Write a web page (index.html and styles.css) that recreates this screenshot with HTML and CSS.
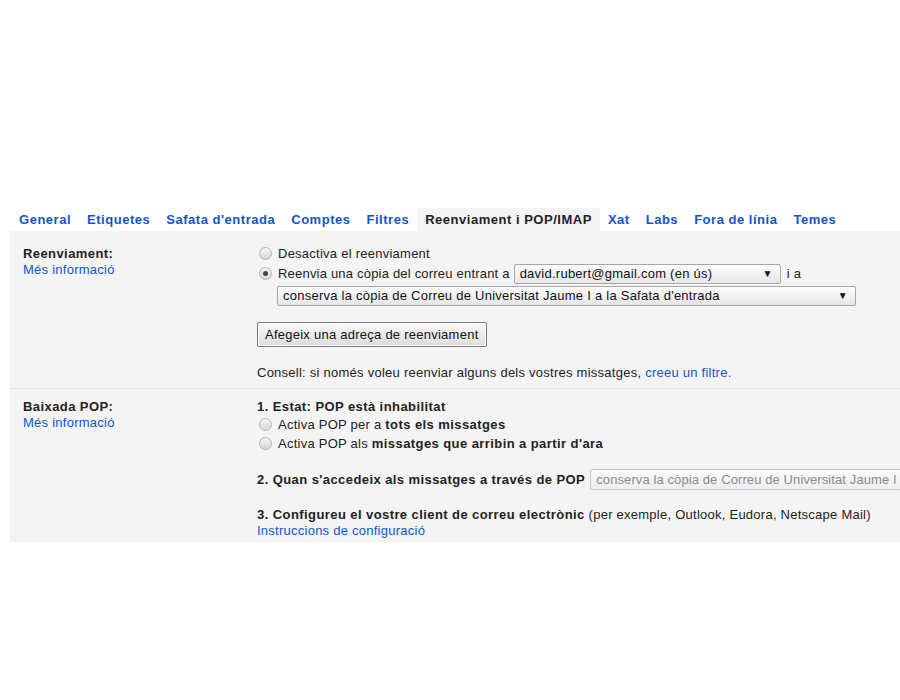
FILE: index.html
```html
<!DOCTYPE html>
<html lang="ca">
<head>
<meta charset="utf-8">
<title>Configuració</title>
<link rel="stylesheet" href="styles.css">
</head>
<body>
<div class="page">
  <nav class="tabs">
    <a class="tab">General</a>
    <a class="tab">Etiquetes</a>
    <a class="tab">Safata d'entrada</a>
    <a class="tab">Comptes</a>
    <a class="tab">Filtres</a>
    <span class="tab active">Reenviament i POP/IMAP</span>
    <a class="tab">Xat</a>
    <a class="tab">Labs</a>
    <a class="tab">Fora de línia</a>
    <a class="tab">Temes</a>
  </nav>
  <div class="panel">
    <div class="row row-fwd">
      <div class="label">
        <div class="label-title">Reenviament:</div>
        <a class="link">Més informació</a>
      </div>
      <div class="content">
        <div class="radio-line"><span class="radio"></span>Desactiva el reenviament</div>
        <div class="radio-line line-sel"><span class="radio checked"></span><span class="fwd-text">Reenvia una còpia del correu entrant a</span><span class="select sel-email">david.rubert@gmail.com (en ús)<span class="arrow">▼</span></span>i a</div>
        <div class="select sel-keep">conserva la còpia de Correu de Universitat Jaume I a la Safata d'entrada<span class="arrow">▼</span></div>
        <div class="btn">Afegeix una adreça de reenviament</div>
        <div class="tip">Consell: si només voleu reenviar alguns dels vostres missatges, <a class="link">creeu un filtre.</a></div>
      </div>
    </div>
    <div class="row row-pop">
      <div class="label">
        <div class="label-title">Baixada POP:</div>
        <a class="link">Més informació</a>
      </div>
      <div class="content">
        <div class="step"><b>1. Estat: POP està inhabilitat</b></div>
        <div class="radio-line"><span class="radio"></span>Activa POP per a&nbsp;<b>tots els missatges</b></div>
        <div class="radio-line"><span class="radio"></span>Activa POP als&nbsp;<b>missatges que arribin a partir d'ara</b></div>
        <div class="step step2"><b>2. Quan s'accedeix als missatges a través de POP</b><span class="select disabled">conserva la còpia de Correu de Universitat Jaume I</span></div>
        <div class="step step3"><b>3. Configureu el vostre client de correu electrònic</b> (per exemple, Outlook, Eudora, Netscape Mail)</div>
        <div class="step"><a class="link">Instruccions de configuració</a></div>
      </div>
    </div>
  </div>
</div>
</body>
</html>
```
FILE: styles.css
```css
html, body {
  margin: 0;
  padding: 0;
  background: #fff;
}
body {
  font-family: "Liberation Sans", Arial, sans-serif;
  font-size: 13px;
  letter-spacing: 0.25px;
  color: #222;
  overflow: hidden;
  width: 900px;
  height: 700px;
}
b, .label-title {
  font-weight: bold;
  letter-spacing: 0.42px;
}
.page {
  padding-top: 208px;
}
.tabs {
  display: flex;
  padding-left: 11px;
  height: 23px;
}
.tab {
  font-weight: bold;
  letter-spacing: 0.52px;
  color: #1155cc;
  line-height: 23px;
  padding: 0 8px;
  white-space: nowrap;
}
.tab.active {
  color: #222;
  background: #f4f4f4;
}
.panel {
  margin-left: 10px;
  width: 890px;
  background: #f4f4f4;
  overflow: hidden;
}
.row {
  display: flex;
  padding-left: 13px;
}
.row-fwd {
  padding-top: 13px;
  padding-bottom: 6px;
  border-bottom: 1px solid #e3e3e3;
}
.row-pop {
  padding-top: 10px;
  padding-bottom: 3px;
}
.label {
  width: 234px;
  flex: none;
  line-height: 16px;
}
.row-fwd .label {
  padding-top: 2px;
}
.label-title {
  color: #222;
}
.link {
  color: #1155cc;
  display: inline-block;
}
.content {
  flex: 1;
  white-space: nowrap;
  min-width: 0;
}
.radio-line {
  display: flex;
  align-items: center;
  height: 19px;
  line-height: 19px;
}
.line-sel {
  height: 21px;
}
.fwd-text {
  letter-spacing: 0.2px;
}
.radio {
  width: 11px;
  height: 11px;
  border-radius: 50%;
  border: 1px solid #b4b4b4;
  background: linear-gradient(#f6f6f6, #d6d6d6);
  margin: 0 6px 0 2px;
  position: relative;
  flex: none;
}
.radio.checked::after {
  content: "";
  position: absolute;
  left: 3px;
  top: 3px;
  width: 5px;
  height: 5px;
  border-radius: 50%;
  background: #444;
}
.select {
  display: inline-flex;
  align-items: center;
  box-sizing: border-box;
  height: 20px;
  border: 1px solid #a6a6a6;
  border-radius: 2px;
  background: linear-gradient(#fdfdfd, #e6e6e6);
  color: #111;
  padding: 0 7px 0 5px;
  line-height: 18px;
  white-space: nowrap;
  overflow: hidden;
}
.arrow {
  font-size: 10px;
  margin-left: auto;
  color: #111;
}
.sel-email {
  width: 267px;
  margin: 0 6px 0 4px;
}
.sel-keep {
  display: flex;
  width: 579px;
  height: 20px;
  margin: 2px 0 0 20px;
}
.btn {
  display: inline-block;
  box-sizing: border-box;
  height: 25px;
  line-height: 23px;
  margin-top: 16px;
  padding: 0 7px;
  border: 1px solid #777;
  border-radius: 2px;
  background: linear-gradient(#fafafa, #dcdcdc);
  box-shadow: inset 0 0 0 1px #fff;
  color: #111;
}
.tip {
  margin-top: 16px;
  line-height: 19px;
}
.step {
  line-height: 16px;
}
.step2 {
  margin-top: 16px;
  height: 21px;
  display: flex;
  align-items: center;
}
.select.disabled {
  height: 21px;
  margin-left: 5px;
  color: #8a8a8a;
  border-color: #c6c6c6;
  background: linear-gradient(#fbfbfb, #eeeeee);
  flex: none;
  letter-spacing: 0.1px;
}
.step3 {
  margin-top: 17px;
}
```
